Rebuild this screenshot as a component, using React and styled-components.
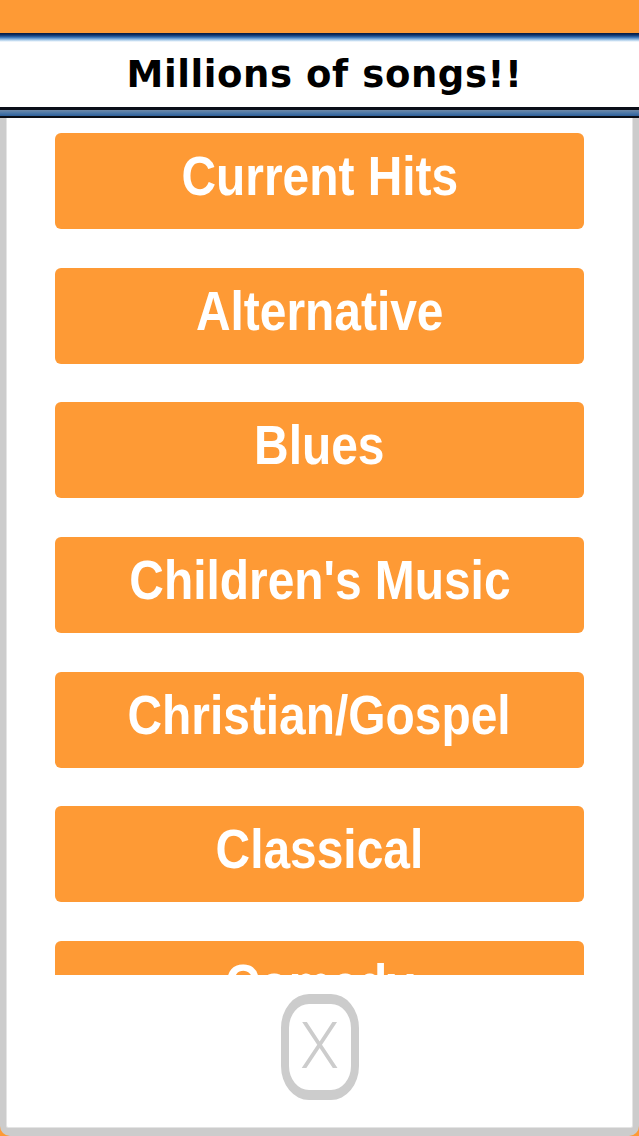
import React from 'react';
import styled, { createGlobalStyle } from 'styled-components';

const GlobalStyle = createGlobalStyle`
  html, body {
    margin: 0;
    padding: 0;
    background: #fe9a35;
  }
  body {
    font-family: "Liberation Sans", Arial, sans-serif;
  }
`;

const genres = [
  'Current Hits',
  'Alternative',
  'Blues',
  "Children's Music",
  'Christian/Gospel',
  'Classical',
  'Comedy',
  'Country',
];

const App = () => {
  return (
    <>
      <GlobalStyle />
      <Screen>
        <TopBar />
        <TitleBar>
          <Title>Millions of songs!!</Title>
        </TitleBar>
        <Panel>
          <GenreList>
            {genres.map((g) => (
              <GenreButton key={g}>
                <Label>{g}</Label>
              </GenreButton>
            ))}
          </GenreList>
          <Footer>
            <CloseButton aria-label="close">X</CloseButton>
          </Footer>
        </Panel>
      </Screen>
    </>
  );
};

export default App;

const Screen = styled.div`
  height: 1136px;
  width: 639px;
  display: flex;
  flex-direction: column;
  overflow: hidden;
  background: #fe9a35;
`;

const TopBar = styled.div`
  height: 33px;
  flex-shrink: 0;
  background: #fe9a35;
`;

const TitleBar = styled.div`
  flex-shrink: 0;
  height: 85px;
  box-sizing: border-box;
  padding: 9px 0 11px;
  display: flex;
  align-items: center;
  justify-content: center;
  background:
    linear-gradient(
      180deg,
      #061a3e 0px,
      #0f326a 2px,
      #2f68aa 4px,
      #7fadd9 6px,
      #d6e8f7 8px,
      #ffffff 9px
    ) top / 100% 9px no-repeat,
    linear-gradient(
      180deg,
      #0b0f18 0px,
      #0b0f18 3px,
      #6f89a8 3px,
      #4c78a8 6px,
      #2d5f9a 9px,
      #0b0f18 9.5px,
      #0b0f18 11px
    ) bottom / 100% 11px no-repeat,
    #ffffff;
`;

const Title = styled.h1`
  margin: 0 0 0 10px;
  font-family: "DejaVu Sans", "Liberation Sans", sans-serif;
  font-weight: 700;
  font-size: 37px;
  letter-spacing: 0.6px;
  color: #000;
  line-height: 1;
`;

const Panel = styled.div`
  flex: 1;
  min-height: 0;
  display: flex;
  flex-direction: column;
  background: #ffffff;
  border: solid #cccccc;
  border-width: 0 6px 8px 6px;
  border-radius: 0 0 10px 10px;
  box-shadow: inset 0 -1px 0 #e4e4e4, inset 1px 0 0 #e4e4e4, inset -1px 0 0 #e4e4e4;
`;

const GenreList = styled.div`
  flex: 1;
  min-height: 0;
  overflow: hidden;
  display: flex;
  flex-direction: column;
  align-items: center;
  gap: 38.7px;
  padding-top: 15px;
`;

const GenreButton = styled.div`
  flex-shrink: 0;
  width: 529px;
  height: 96px;
  box-sizing: border-box;
  padding-bottom: 10px;
  border-radius: 6px;
  background: #fe9a35;
  color: #ffffff;
  display: flex;
  align-items: center;
  justify-content: center;
  font-family: "Liberation Sans", Arial, sans-serif;
  font-weight: 700;
  font-size: 56px;
  line-height: 1;
`;

const Label = styled.span`
  display: inline-block;
  white-space: nowrap;
  transform: scaleX(0.855);
`;

const Footer = styled.div`
  flex-shrink: 0;
  height: 153px;
  display: flex;
  justify-content: center;
  padding-top: 19px;
  box-sizing: border-box;
`;

const CloseButton = styled.div`
  width: 78px;
  height: 106px;
  box-sizing: border-box;
  border: solid #cccccc;
  border-width: 10px 8px;
  border-radius: 28px / 34px;
  display: flex;
  align-items: center;
  justify-content: center;
  color: #cccccc;
  font-family: Roboto, "Open Sans", sans-serif;
  font-weight: 300;
  font-size: 64px;
  line-height: 1;
`;
